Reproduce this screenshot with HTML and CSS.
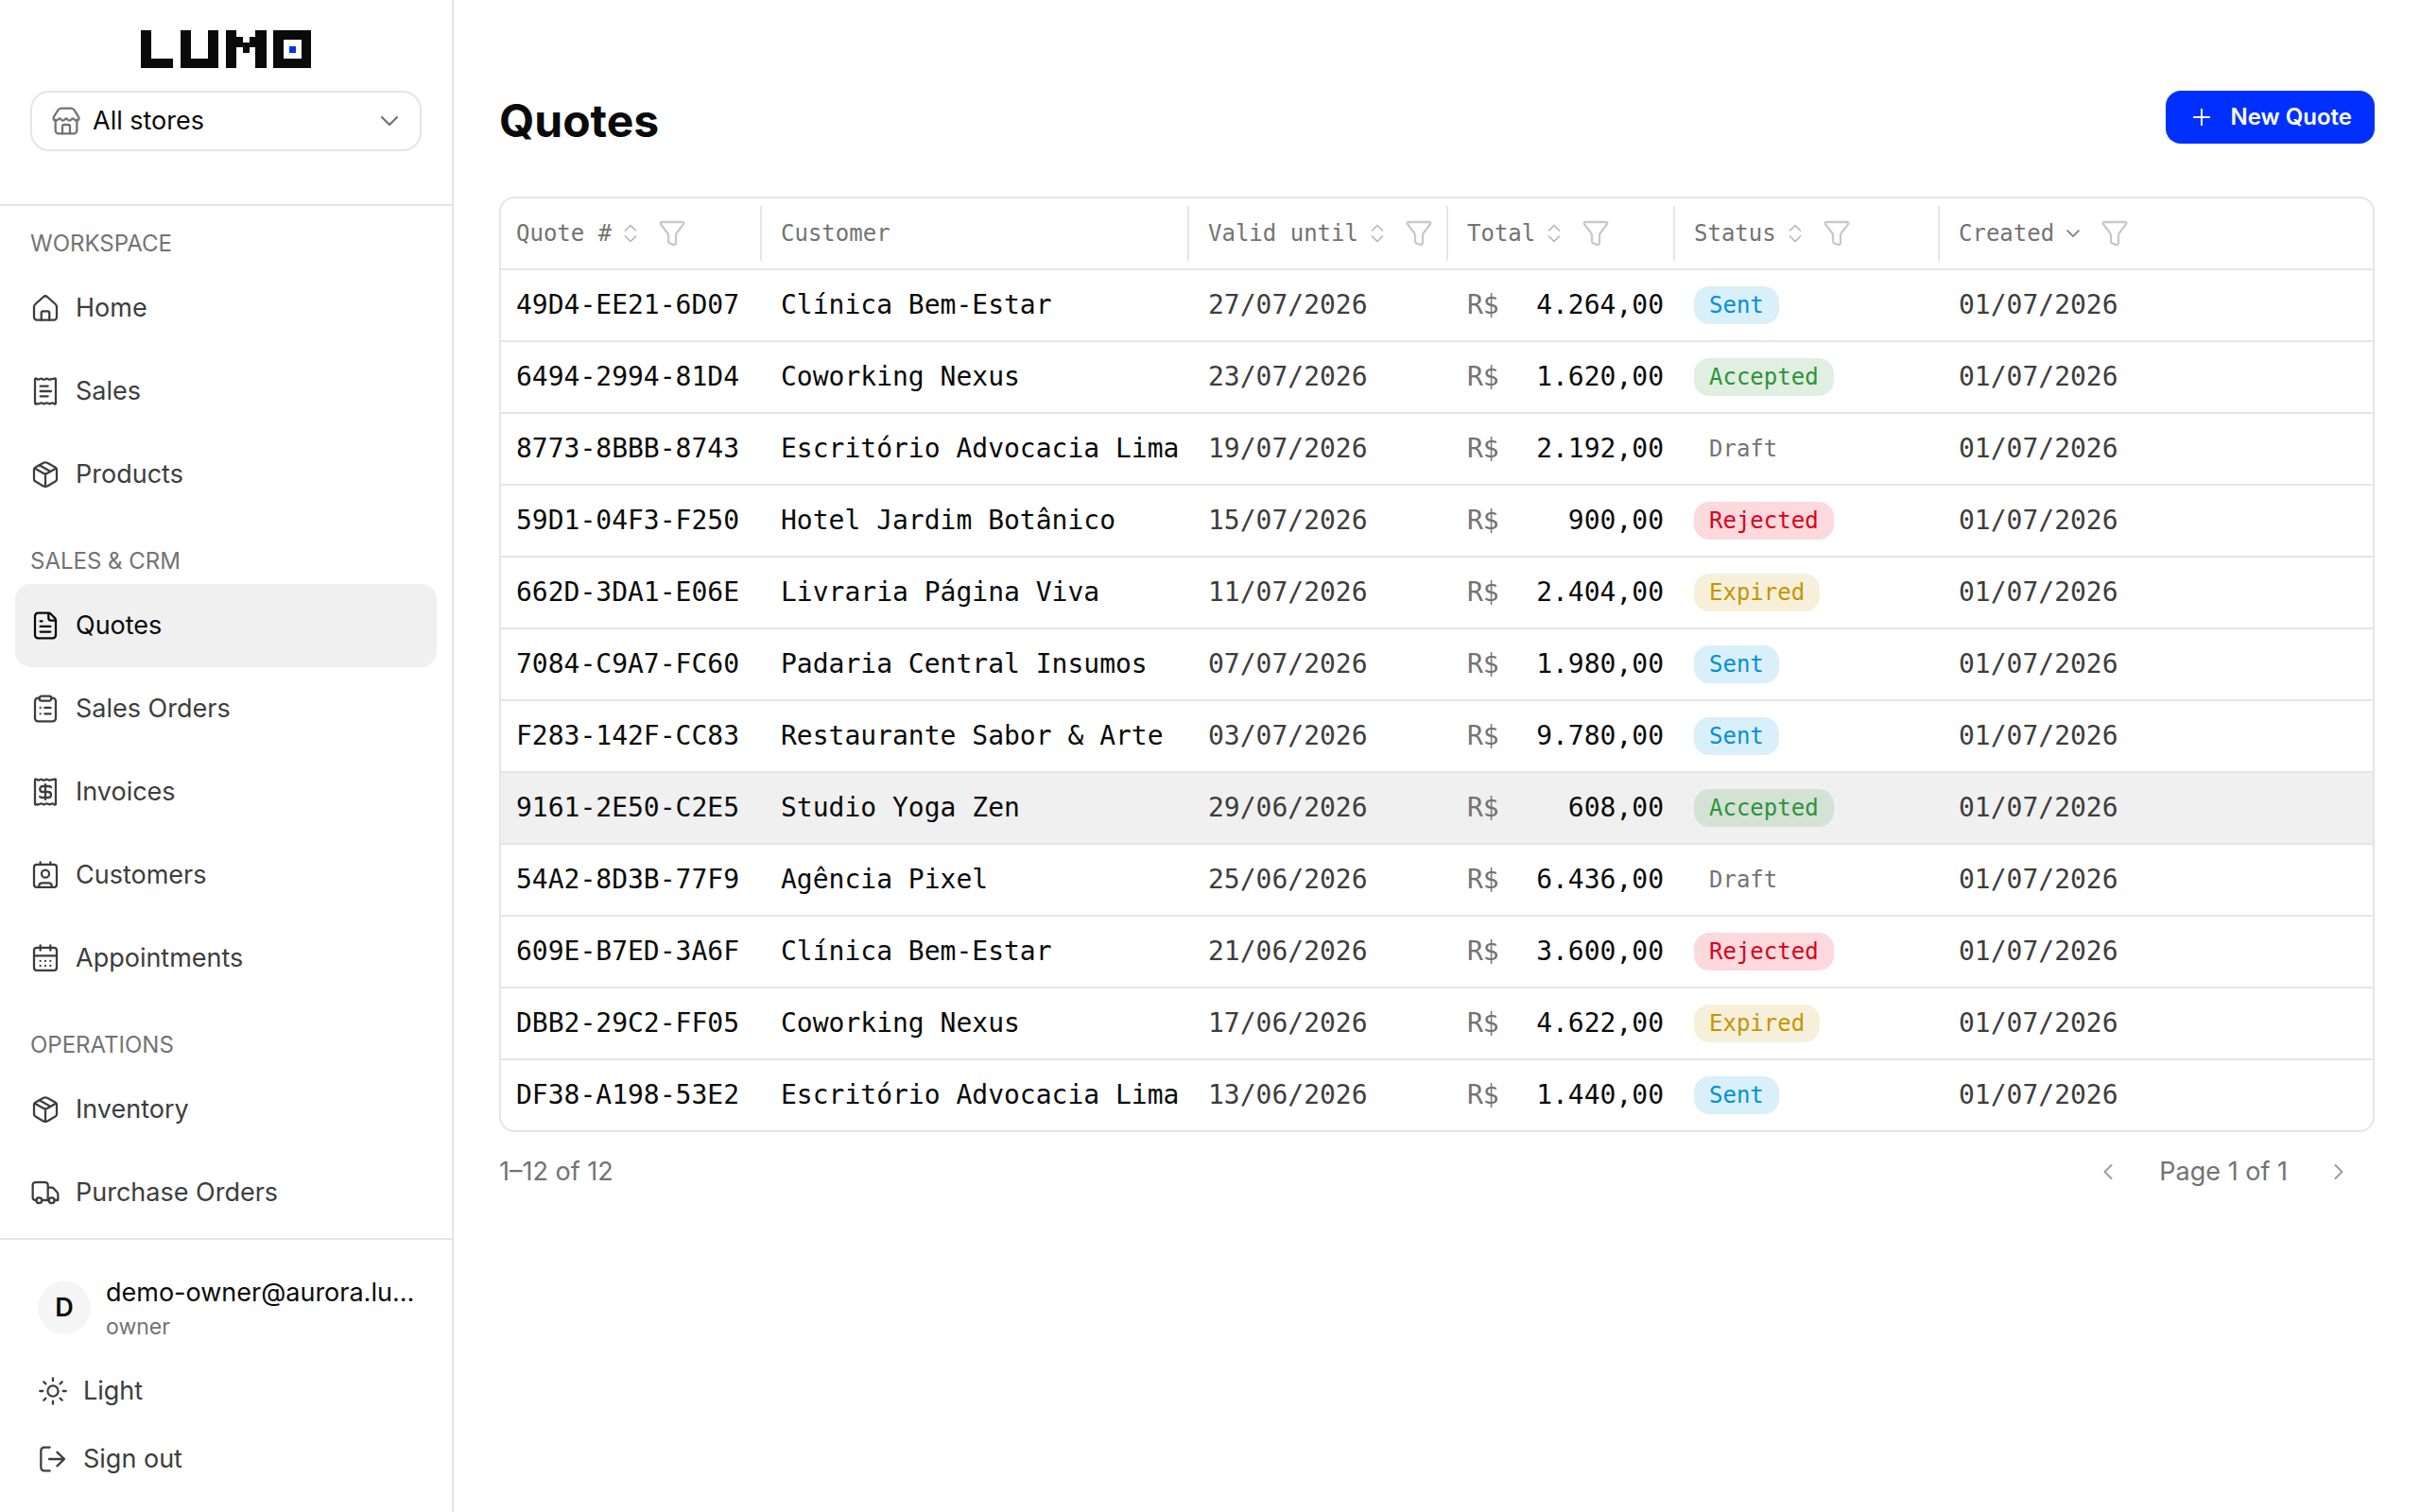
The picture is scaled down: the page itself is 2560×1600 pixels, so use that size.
FILE: index.html
```html
<!DOCTYPE html>
<html lang="en">
<head>
  <meta charset="UTF-8" />
  <meta name="viewport" content="width=device-width, initial-scale=1" />
  <title>Quotes - Lumo</title>
  <link rel="stylesheet" href="styles.css">
</head>
<body>

  <!-- Shared icons -->
  <svg class="sprite" aria-hidden="true">
    <symbol id="i-store" viewBox="0 0 24 24">
      <path d="M3.5 11v8.5a2.500 2.500 0 0 0 2.500 2.500h12a2.500 2.500 0 0 0 2.500-2.500V11" />
      <path d="M9 22v-5.500a1.500 1.500 0 0 1 1.500-1.500h3a1.500 1.500 0 0 1 1.500 1.500V22" />
      <path d="M5.500 3.500 2.300 8.500c-.8 1.300-.6 3.200 1.500 3.200 1.700 0 2-1.700 3-1.700s1.200 1.700 2.600 1.700S11.200 10 12 10s1.200 1.700 2.600 1.700S16.300 10 17.200 10s1.300 1.700 3 1.700c2.100 0 2.300-1.900 1.500-3.200l-3.200-5c-.6-.9-1.200-1.500-2.500-1.500H8c-1.300 0-1.900.6-2.500 1.500Z" />
    </symbol>
    <symbol id="i-down" viewBox="0 0 24 24"><path d="m6 9 6 6 6-6" /></symbol>
    <symbol id="i-left" viewBox="0 0 24 24"><path d="m15 6-6 6 6 6" /></symbol>
    <symbol id="i-right" viewBox="0 0 24 24"><path d="m9 6 6 6-6 6" /></symbol>
    <symbol id="i-plus" viewBox="0 0 24 24"><path d="M12 5v14M5 12h14" /></symbol>
    <symbol id="i-sort" viewBox="0 0 24 24"><path d="m6.500 9 5.500-5.500L17.500 9M6.500 15l5.500 5.500 5.500-5.500" /></symbol>
    <symbol id="i-filter" viewBox="0 0 24 24">
      <path d="M4 3h16c1.300 0 1.500.9.900 1.800l-5.200 6.800c-.5.700-.7 1.200-.7 2.100V19c0 1.600-.6 2.300-1.600 1.900L10.100 20c-.8-.4-1.100-.9-1.100-1.800v-4.500c0-.9-.2-1.400-.7-2.100L3.100 4.800C2.500 3.900 2.700 3 4 3Z" />
    </symbol>
    <symbol id="i-home" viewBox="0 0 24 24">
      <path d="M3 11.200c0-1.100.3-1.700 1.100-2.400l6.300-5.600c1-.9 2.200-.9 3.200 0l6.300 5.600c.8.700 1.100 1.300 1.100 2.400v8a2.300 2.300 0 0 1-2.300 2.300H5.300A2.300 2.300 0 0 1 3 19.200Z" />
      <path d="M8.800 21.500V16a1.500 1.500 0 0 1 1.500-1.500h3.400a1.500 1.500 0 0 1 1.500 1.500v5.500" />
    </symbol>
    <symbol id="i-receipt" viewBox="0 0 24 24">
      <path d="M3.750 2.800c0-1 .6-1.200 1.300-.7.900.6 1.700.9 2.500.3s1.300-.6 2.200 0 1.300.6 2.200 0 1.400-.6 2.300 0 1.300.6 2.200 0 1.700-.2 2.500-.3c.8-.5 1.300-.3 1.300.7v18.400c0 1-.5 1.200-1.300.7-.8-.6-1.600-.9-2.500-.3s-1.300.6-2.200 0-1.400-.6-2.300 0-1.300.6-2.200 0-1.400-.6-2.200 0-1.600.3-2.500.3c-.7.500-1.300.300-1.300-.7Z" />
    </symbol>
    <symbol id="i-sales" viewBox="0 0 24 24">
      <use href="#i-receipt" width="24" height="24" />
      <path d="M8 8h6M8 12h8.500M8 16h6" />
    </symbol>
    <symbol id="i-invoice" viewBox="0 0 24 24">
      <use href="#i-receipt" width="24" height="24" />
      <path d="M16.500 8.300c-.4-.5-1.200-.8-2-.8H10c-1.400 0-2.300.9-2.300 2.200S8.600 12 10 12h4c1.500 0 2.500.9 2.500 2.200s-1 2.300-2.500 2.300H9.500c-.8 0-1.400-.200-1.900-.7M12 6v12" />
    </symbol>
    <symbol id="i-box" viewBox="0 0 24 24">
      <path d="M21 8.300v7.400c0 1-.3 1.500-1.200 2L13.500 21.300c-1.100.7-1.900.7-3 0L4.200 17.700c-.9-.5-1.200-1-1.200-2V8.300c0-1 .3-1.500 1.200-2l6.300-3.400c1.100-.6 1.900-.6 3 0l6.300 3.400c.9.500 1.200 1 1.200 2Z" />
      <path d="m3.500 7.200 6.800 3.900c1.200.7 2.200.7 3.400 0l6.800-3.900M12 11.800v9.900M7.200 4.700l9 5" />
    </symbol>
    <symbol id="i-quote" viewBox="0 0 24 24">
      <path d="M14.500 2H6.200a2.450 2.450 0 0 0-2.450 2.500v15A2.450 2.450 0 0 0 6.200 22h11.600a2.450 2.450 0 0 0 2.450-2.500V7.800c0-.9-.2-1.300-.8-1.900l-3.100-3.100c-.6-.6-1-.8-1.850-.8Z" />
      <path d="M14.500 2.300V6c0 1.300.6 2 2 2h3.500M8 8.500h1.500M8 12.700h8M8 16.900h8" />
    </symbol>
    <symbol id="i-clipboard" viewBox="0 0 24 24">
      <path d="M7.300 3.500H6.200A2.450 2.450 0 0 0 3.750 6v13.500A2.450 2.450 0 0 0 6.200 22h11.600a2.450 2.450 0 0 0 2.450-2.500V6a2.450 2.450 0 0 0-2.450-2.500h-1.100" />
      <rect x="7.300" y="2" width="9.400" height="3.700" rx="1.600" />
      <path d="M8 11.200h.01M8 16h.01M11.500 11.200h4.700M11.500 16h4.700" />
    </symbol>
    <symbol id="i-customer" viewBox="0 0 24 24">
      <rect x="3" y="3.700" width="18" height="18" rx="2.200" />
      <path d="M8 1.800v1.900M16 1.800v1.900M7 21.500v-1a2.300 2.300 0 0 1 2.300-2.300h5.400a2.300 2.300 0 0 1 2.300 2.300v1" />
      <circle cx="12" cy="11" r="3" />
    </symbol>
    <symbol id="i-calendar" viewBox="0 0 24 24">
      <rect x="3" y="3.700" width="18" height="18" rx="2.200" />
      <path d="M8 1.800v4M16 1.800v4M3 10h18M8 14.200h.01M12 14.200h.01M16 14.200h.01M8 18h.01M12 18h.01M16 18h.01" />
    </symbol>
    <symbol id="i-truck" viewBox="0 0 24 24">
      <path d="M5 18H4a2 2 0 0 1-2-2V6a2.200 2.200 0 0 1 2.200-2.200h7.600A2.200 2.200 0 0 1 14 6v12M14 8h3c.8 0 1.200.2 1.700.8l2.700 3c.5.600.6 1 .6 1.700V18h-2.800M9.200 18h5.600" />
      <circle cx="7" cy="18.200" r="2.200" />
      <circle cx="17" cy="18.200" r="2.200" />
    </symbol>
    <symbol id="i-sun" viewBox="0 0 24 24">
      <circle cx="12" cy="12" r="4.200" />
      <path d="M12 1.700V4M12 20v2.300M22.300 12H20M4 12H1.700M19.300 4.700l-1.600 1.600M6.300 17.700l-1.600 1.600M19.300 19.300l-1.600-1.600M6.300 6.300 4.700 4.700" />
    </symbol>
    <symbol id="i-logout" viewBox="0 0 24 24">
      <path d="M9.500 2.700H5a2.500 2.500 0 0 0-2.500 2.500v13.600A2.500 2.500 0 0 0 5 21.300h4.500M9 12h12M15.300 6.500 21 12l-5.700 5.500" />
    </symbol>
  </svg>

  <div class="layout">
    <aside class="sidebar">
      <div class="sidebar-header">
        <svg class="logo" viewBox="0 0 540 120" role="img" aria-label="Lumo">
          <rect x="0" y="0" width="34" height="120" />
          <rect x="0" y="90" width="102" height="30" />
          <rect x="126" y="0" width="34" height="120" />
          <rect x="126" y="90" width="120" height="30" />
          <rect x="212" y="0" width="34" height="120" />
          <rect x="270" y="0" width="33" height="120" />
          <rect x="303" y="21" width="21" height="33" />
          <rect x="324" y="39" width="21" height="33" />
          <rect x="345" y="21" width="21" height="33" />
          <rect x="364" y="0" width="34" height="120" />
          <rect x="420" y="0" width="120" height="30" />
          <rect x="420" y="90" width="120" height="30" />
          <rect x="420" y="0" width="33" height="120" />
          <rect x="510" y="0" width="30" height="120" />
          <rect class="logo-dot" x="471" y="51" width="21" height="21" />
        </svg>

        <div class="store-select">
          <svg class="icon"><use href="#i-store" /></svg>
          <select id="store" aria-label="Store">
            <option>All stores</option>
          </select>
          <svg class="icon"><use href="#i-down" /></svg>
        </div>
      </div>

      <nav class="nav">
        <div class="nav-group">
          <h2>WORKSPACE</h2>
          <a href="#"><svg class="icon"><use href="#i-home" /></svg>Home</a>
          <a href="#"><svg class="icon"><use href="#i-sales" /></svg>Sales</a>
          <a href="#"><svg class="icon"><use href="#i-box" /></svg>Products</a>
        </div>
        <div class="nav-group">
          <h2>SALES &amp; CRM</h2>
          <a href="#" class="active"><svg class="icon"><use href="#i-quote" /></svg>Quotes</a>
          <a href="#"><svg class="icon"><use href="#i-clipboard" /></svg>Sales Orders</a>
          <a href="#"><svg class="icon"><use href="#i-invoice" /></svg>Invoices</a>
          <a href="#"><svg class="icon"><use href="#i-customer" /></svg>Customers</a>
          <a href="#"><svg class="icon"><use href="#i-calendar" /></svg>Appointments</a>
        </div>
        <div class="nav-group">
          <h2>OPERATIONS</h2>
          <a href="#"><svg class="icon"><use href="#i-box" /></svg>Inventory</a>
          <a href="#"><svg class="icon"><use href="#i-truck" /></svg>Purchase Orders</a>
        </div>
      </nav>

      <div class="sidebar-footer">
        <div class="user">
          <span class="avatar">D</span>
          <div>
            <p class="user-email">demo-owner@aurora.lu…</p>
            <p class="user-role">owner</p>
          </div>
        </div>
        <button type="button" class="footer-btn"><svg class="icon"><use href="#i-sun" /></svg>Light</button>
        <button type="button" class="footer-btn"><svg class="icon"><use href="#i-logout" /></svg>Sign out</button>
      </div>
    </aside>

    <main class="main">
      <header class="page-header">
        <h1>Quotes</h1>
        <button type="button" class="btn-primary"><svg class="icon"><use href="#i-plus" /></svg>New Quote</button>
      </header>

      <div class="table-card">
        <table>
          <colgroup>
            <col class="col-number">
            <col class="col-customer">
            <col class="col-valid">
            <col class="col-total">
            <col class="col-status">
            <col>
          </colgroup>
          <thead>
            <tr>
              <th>
                <div class="th-inner">
                  <button type="button" class="sort">Quote #<svg class="icon"><use href="#i-sort" /></svg></button>
                  <button type="button" class="filter" aria-label="Filter quote number"><svg class="icon"><use href="#i-filter" /></svg></button>
                </div>
              </th>
              <th><div class="th-inner">Customer</div></th>
              <th>
                <div class="th-inner">
                  <button type="button" class="sort">Valid until<svg class="icon"><use href="#i-sort" /></svg></button>
                  <button type="button" class="filter" aria-label="Filter valid until"><svg class="icon"><use href="#i-filter" /></svg></button>
                </div>
              </th>
              <th>
                <div class="th-inner">
                  <button type="button" class="sort">Total<svg class="icon"><use href="#i-sort" /></svg></button>
                  <button type="button" class="filter" aria-label="Filter total"><svg class="icon"><use href="#i-filter" /></svg></button>
                </div>
              </th>
              <th>
                <div class="th-inner">
                  <button type="button" class="sort">Status<svg class="icon"><use href="#i-sort" /></svg></button>
                  <button type="button" class="filter" aria-label="Filter status"><svg class="icon"><use href="#i-filter" /></svg></button>
                </div>
              </th>
              <th>
                <div class="th-inner">
                  <button type="button" class="sort sorted">Created<svg class="icon"><use href="#i-down" /></svg></button>
                  <button type="button" class="filter" aria-label="Filter created"><svg class="icon"><use href="#i-filter" /></svg></button>
                </div>
              </th>
            </tr>
          </thead>
          <tbody>
            <tr>
              <td>49D4-EE21-6D07</td>
              <td>Clínica Bem-Estar</td>
              <td class="date">27/07/2026</td>
              <td><div class="money"><span>R$</span>4.264,00</div></td>
              <td><span class="badge sent">Sent</span></td>
              <td class="date">01/07/2026</td>
            </tr>
            <tr>
              <td>6494-2994-81D4</td>
              <td>Coworking Nexus</td>
              <td class="date">23/07/2026</td>
              <td><div class="money"><span>R$</span>1.620,00</div></td>
              <td><span class="badge accepted">Accepted</span></td>
              <td class="date">01/07/2026</td>
            </tr>
            <tr>
              <td>8773-8BBB-8743</td>
              <td>Escritório Advocacia Lima</td>
              <td class="date">19/07/2026</td>
              <td><div class="money"><span>R$</span>2.192,00</div></td>
              <td><span class="badge draft">Draft</span></td>
              <td class="date">01/07/2026</td>
            </tr>
            <tr>
              <td>59D1-04F3-F250</td>
              <td>Hotel Jardim Botânico</td>
              <td class="date">15/07/2026</td>
              <td><div class="money"><span>R$</span>900,00</div></td>
              <td><span class="badge rejected">Rejected</span></td>
              <td class="date">01/07/2026</td>
            </tr>
            <tr>
              <td>662D-3DA1-E06E</td>
              <td>Livraria Página Viva</td>
              <td class="date">11/07/2026</td>
              <td><div class="money"><span>R$</span>2.404,00</div></td>
              <td><span class="badge expired">Expired</span></td>
              <td class="date">01/07/2026</td>
            </tr>
            <tr>
              <td>7084-C9A7-FC60</td>
              <td>Padaria Central Insumos</td>
              <td class="date">07/07/2026</td>
              <td><div class="money"><span>R$</span>1.980,00</div></td>
              <td><span class="badge sent">Sent</span></td>
              <td class="date">01/07/2026</td>
            </tr>
            <tr>
              <td>F283-142F-CC83</td>
              <td>Restaurante Sabor &amp; Arte</td>
              <td class="date">03/07/2026</td>
              <td><div class="money"><span>R$</span>9.780,00</div></td>
              <td><span class="badge sent">Sent</span></td>
              <td class="date">01/07/2026</td>
            </tr>
            <tr class="highlighted">
              <td>9161-2E50-C2E5</td>
              <td>Studio Yoga Zen</td>
              <td class="date">29/06/2026</td>
              <td><div class="money"><span>R$</span>608,00</div></td>
              <td><span class="badge accepted">Accepted</span></td>
              <td class="date">01/07/2026</td>
            </tr>
            <tr>
              <td>54A2-8D3B-77F9</td>
              <td>Agência Pixel</td>
              <td class="date">25/06/2026</td>
              <td><div class="money"><span>R$</span>6.436,00</div></td>
              <td><span class="badge draft">Draft</span></td>
              <td class="date">01/07/2026</td>
            </tr>
            <tr>
              <td>609E-B7ED-3A6F</td>
              <td>Clínica Bem-Estar</td>
              <td class="date">21/06/2026</td>
              <td><div class="money"><span>R$</span>3.600,00</div></td>
              <td><span class="badge rejected">Rejected</span></td>
              <td class="date">01/07/2026</td>
            </tr>
            <tr>
              <td>DBB2-29C2-FF05</td>
              <td>Coworking Nexus</td>
              <td class="date">17/06/2026</td>
              <td><div class="money"><span>R$</span>4.622,00</div></td>
              <td><span class="badge expired">Expired</span></td>
              <td class="date">01/07/2026</td>
            </tr>
            <tr>
              <td>DF38-A198-53E2</td>
              <td>Escritório Advocacia Lima</td>
              <td class="date">13/06/2026</td>
              <td><div class="money"><span>R$</span>1.440,00</div></td>
              <td><span class="badge sent">Sent</span></td>
              <td class="date">01/07/2026</td>
            </tr>
          </tbody>
        </table>
      </div>

      <footer class="table-footer">
        <span>1–12 of 12</span>
        <div class="pagination">
          <button type="button" disabled aria-label="Previous page"><svg class="icon"><use href="#i-left" /></svg></button>
          <span>Page 1 of 1</span>
          <button type="button" disabled aria-label="Next page"><svg class="icon"><use href="#i-right" /></svg></button>
        </div>
      </footer>
    </main>
  </div>

</body>
</html>
```
FILE: styles.css
```css
/* Global Styles */
* {
  margin: 0;
  padding: 0;
  box-sizing: border-box;
}

body {
  font-family: Inter, "Liberation Sans", sans-serif;
  font-size: 27px;
  line-height: 36px;
  background: #fff;
  color: #0a0a0a;
}

a {
  color: inherit;
  text-decoration: none;
}

button,
select {
  font: inherit;
  color: inherit;
  background: none;
  border: none;
  cursor: pointer;
}

.sprite {
  display: none;
}

.icon {
  width: 32px;
  height: 32px;
  flex-shrink: 0;
  fill: none;
  stroke: currentColor;
  stroke-width: 1.7;
  stroke-linecap: round;
  stroke-linejoin: round;
}

.layout {
  display: flex;
  min-height: 100vh;
}

/* Sidebar */
.sidebar {
  width: 480px;
  height: 100vh;
  flex-shrink: 0;
  display: flex;
  flex-direction: column;
  border-right: 2px solid #e5e5e5;
}

.sidebar-header {
  display: flex;
  flex-direction: column;
  gap: 24px;
  padding: 32px 32px 56px;
  border-bottom: 2px solid #e5e5e5;
}

.logo {
  height: 40px;
  fill: #0a0a0a;
  shape-rendering: crispEdges;
}

.logo-dot {
  fill: #0030ff;
}

.store-select {
  display: flex;
  align-items: center;
  gap: 12px;
  height: 64px;
  padding: 0 16px 0 20px;
  border: 2px solid #e5e5e5;
  border-radius: 20px;
  color: #737373;
}

.store-select select {
  flex: 1;
  appearance: none;
  color: #0a0a0a;
}

.nav {
  flex: 1;
  min-height: 0;
  overflow: hidden;
  display: flex;
  flex-direction: column;
  gap: 24px;
  padding: 16px 16px 0;
}

.nav-group h2 {
  padding: 0 16px;
  font-size: 24px;
  font-weight: 400;
  line-height: 48px;
  color: #737373;
}

.nav-group a {
  display: flex;
  align-items: center;
  gap: 16px;
  height: 88px;
  padding: 0 16px;
  border-radius: 16px;
  color: #3d3d3d;
}

.nav-group a.active {
  background: #f0f0f0;
  color: #0a0a0a;
}

.sidebar-footer {
  display: flex;
  flex-direction: column;
  gap: 8px;
  padding: 24px 32px 24px 40px;
  border-top: 2px solid #e5e5e5;
}

.user {
  display: flex;
  align-items: center;
  gap: 16px;
  height: 96px;
}

.avatar {
  width: 56px;
  height: 56px;
  flex-shrink: 0;
  border-radius: 50%;
  background: #f5f5f5;
  font-weight: 600;
  line-height: 56px;
  text-align: center;
}

.user-email {
  line-height: 40px;
  white-space: nowrap;
}

.user-role {
  font-size: 23px;
  line-height: 32px;
  color: #737373;
}

.footer-btn {
  display: flex;
  align-items: center;
  gap: 16px;
  height: 64px;
  color: #3d3d3d;
}

/* Main */
.main {
  flex: 1;
  min-width: 0;
  padding: 96px 48px 48px;
}

.page-header {
  display: flex;
  justify-content: space-between;
  align-items: flex-start;
  margin-bottom: 48px;
}

.page-header h1 {
  font-size: 48px;
  font-weight: 700;
  line-height: 64px;
}

.btn-primary {
  display: flex;
  align-items: center;
  gap: 16px;
  height: 56px;
  padding: 0 24px;
  border-radius: 16px;
  background: #0030ff;
  color: #fff;
  font-size: 24px;
  font-weight: 600;
}

.btn-primary .icon {
  width: 28px;
  height: 28px;
}

/* Table */
.table-card {
  border: 2px solid #e5e5e5;
  border-radius: 16px;
  overflow: hidden;
}

table {
  width: 100%;
  table-layout: fixed;
  border-collapse: separate;
  border-spacing: 0;
  font-family: "DejaVu Sans Mono", "Liberation Mono", monospace;
  font-size: 28px;
}

.col-number {
  width: 276px;
}

.col-customer {
  width: 452px;
}

.col-valid {
  width: 274px;
}

.col-total {
  width: 240px;
}

.col-status {
  width: 280px;
}

th {
  padding: 8px 0;
  border-bottom: 2px solid #e5e5e5;
  font-size: 24px;
  font-weight: 400;
  text-align: left;
  color: #737373;
}

.th-inner {
  display: flex;
  align-items: center;
  gap: 16px;
  height: 58px;
  padding-left: 20px;
  border-right: 2px solid #e5e5e5;
}

th:first-child .th-inner {
  padding-left: 16px;
}

th:last-child .th-inner {
  border-right: none;
}

.sort {
  display: flex;
  align-items: center;
  gap: 8px;
}

.sort .icon {
  width: 24px;
  height: 24px;
  color: #b8b8b8;
}

.sort.sorted .icon {
  color: #737373;
}

.filter {
  display: flex;
  color: #c8c8c8;
}

td {
  height: 76px;
  padding: 0 12px 0 20px;
  border-bottom: 2px solid #e5e5e5;
  white-space: nowrap;
}

td:first-child {
  padding-left: 16px;
}

tbody tr:last-child td {
  height: 74px;
  border-bottom: none;
}

.highlighted {
  background: #f0f0f0;
}

.date {
  color: #3d3d3d;
}

.money {
  display: flex;
  justify-content: space-between;
}

.money span {
  color: #737373;
}

.badge {
  display: inline-block;
  padding: 0 16px;
  border-radius: 16px;
  font-size: 24px;
  line-height: 40px;
  vertical-align: middle;
}

.sent {
  background: rgba(0, 149, 218, 0.15);
  color: #0090dc;
}

.accepted {
  background: rgba(46, 147, 58, 0.15);
  color: #2e933a;
}

.rejected {
  background: rgba(230, 0, 26, 0.15);
  color: #dc0019;
}

.expired {
  background: rgba(196, 150, 0, 0.15);
  color: #c49600;
}

.draft {
  color: #737373;
}

.table-footer {
  display: flex;
  justify-content: space-between;
  align-items: center;
  margin-top: 14px;
  color: #737373;
}

.pagination {
  display: flex;
  align-items: center;
  gap: 16px;
}

.pagination button {
  display: flex;
  justify-content: center;
  align-items: center;
  width: 76px;
  height: 56px;
  opacity: 0.7;
}

.pagination .icon {
  width: 28px;
  height: 28px;
}
```
